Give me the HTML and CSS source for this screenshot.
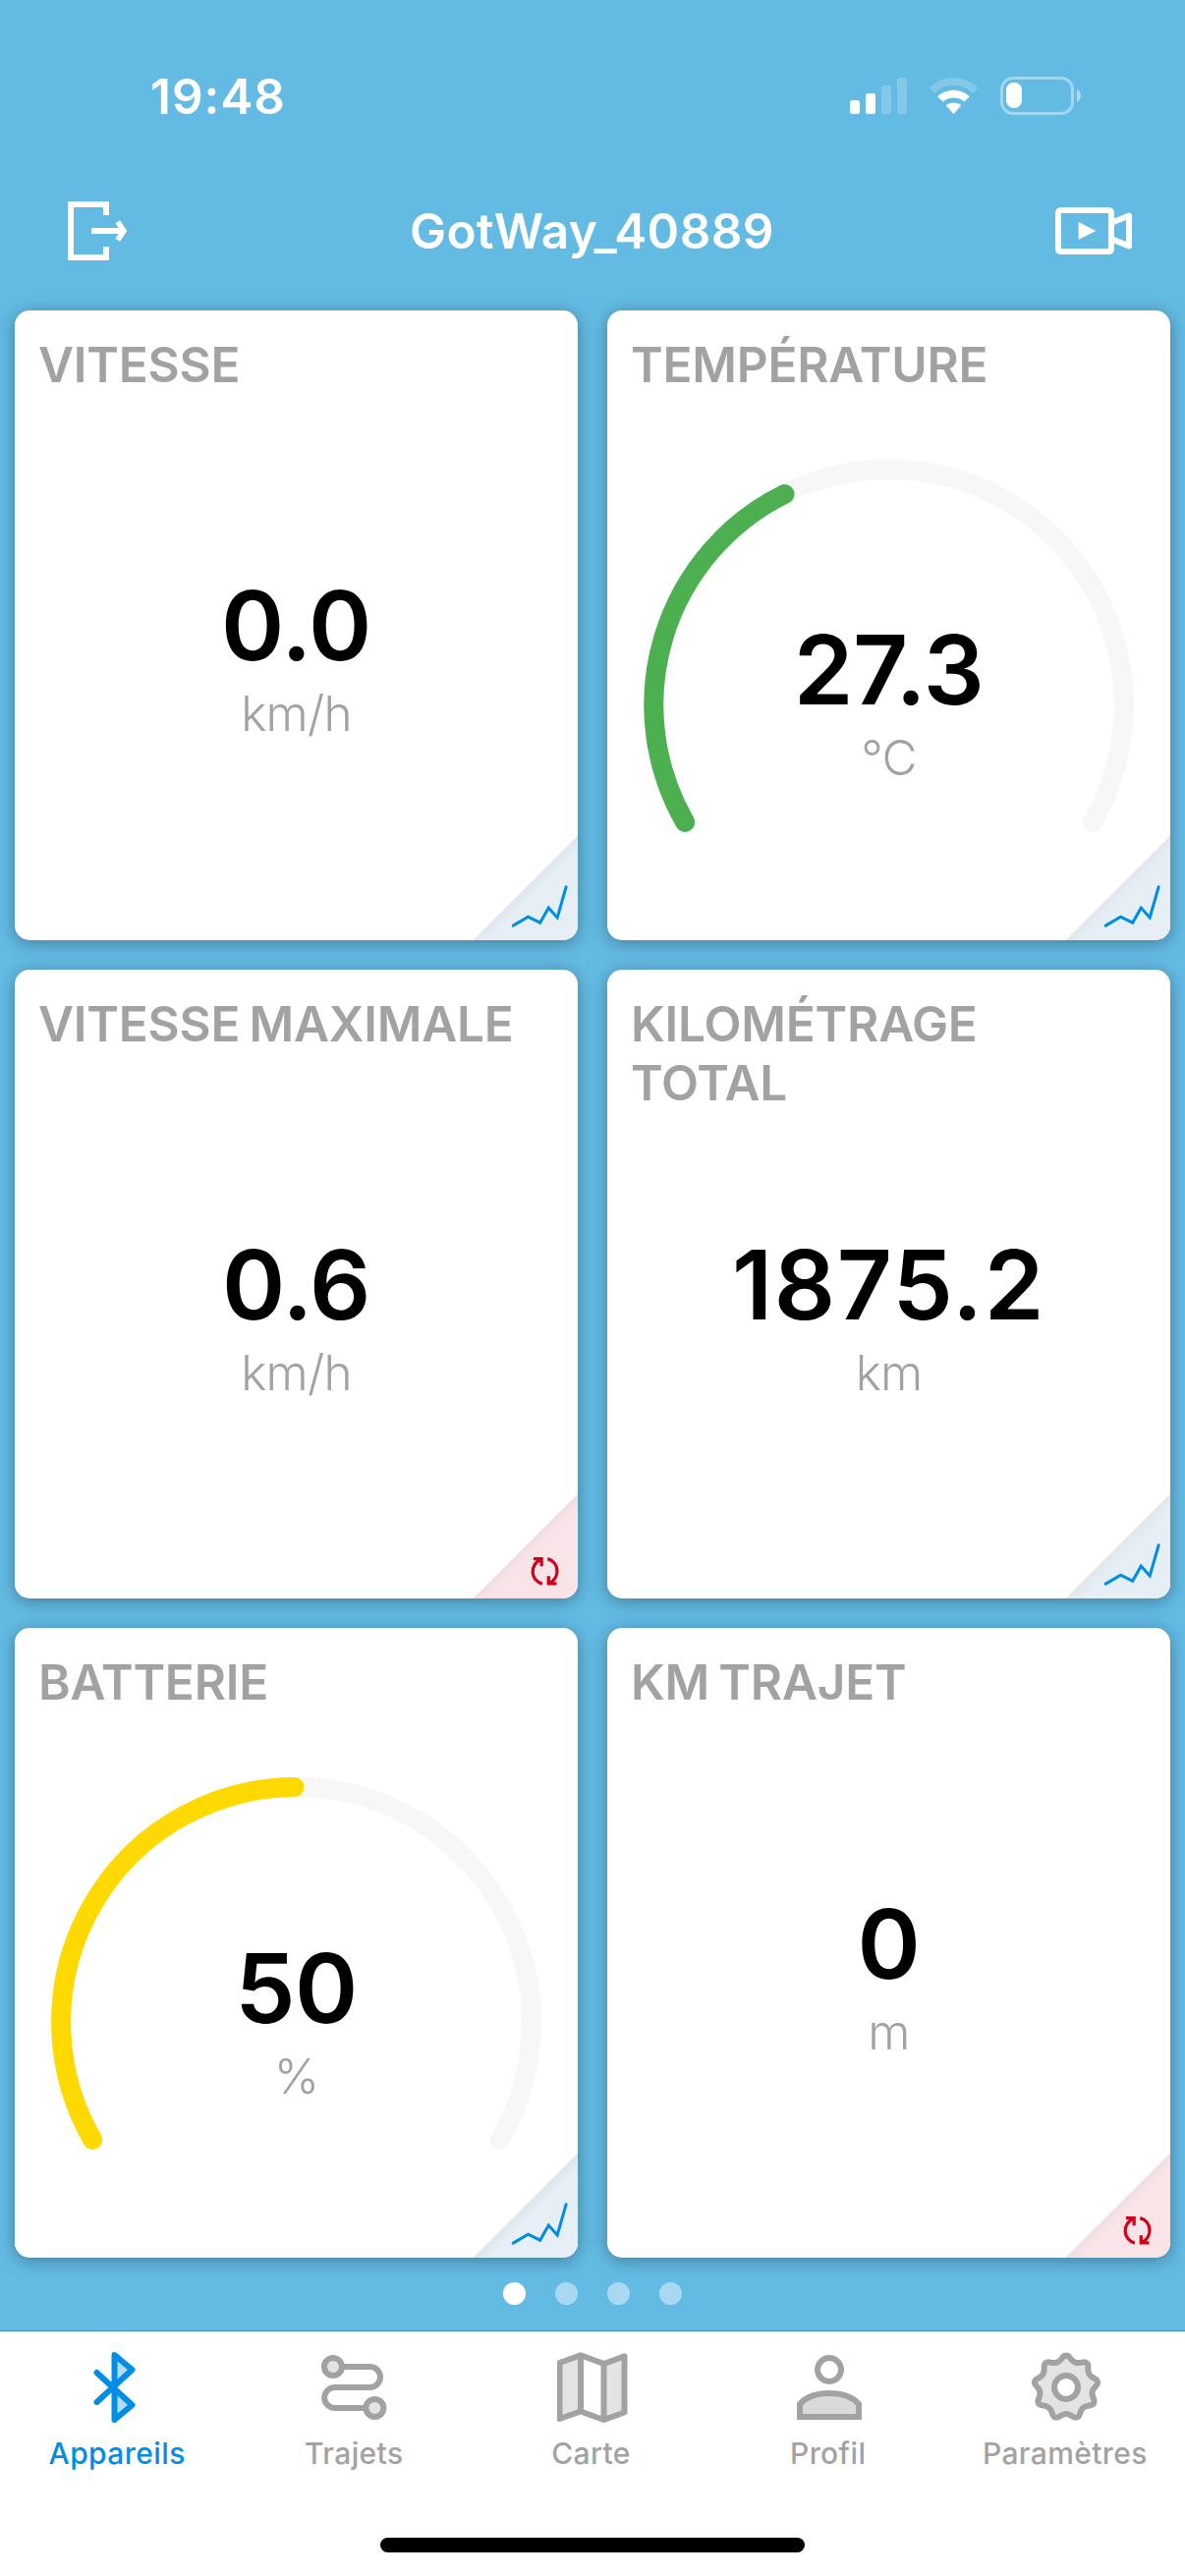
FILE: index.html
```
<!DOCTYPE html>
<html lang="fr">
<head>
  <meta charset="UTF-8" />
  <meta name="viewport" content="width=device-width, initial-scale=1.0"/>
  <title>GotWay_40889</title>
  <link rel="stylesheet" href="styles.css">
</head>
<body>

<!-- shared shapes -->
<svg class="defs" width="0" height="0">
  <symbol id="chart" viewBox="0 0 108 108">
    <path d="M41.7 93 L57 84 L69.3 90 L78 74.7 L87 84.7 L96 53.3" fill="none" stroke="#008de5" stroke-width="3.1" stroke-linecap="round"/>
  </symbol>
  <symbol id="reset" viewBox="0 0 108 108">
    <g fill="none" stroke="#d0021b" stroke-width="3.3">
      <path d="M71.5 93 A13.2 13.2 0 0 1 70 68"/>
      <path d="M62.5 67.3 H70.8 V75"/>
      <path d="M77 67.2 A13.2 13.2 0 0 1 79 92"/>
      <path d="M86.3 92.8 H78 V85"/>
    </g>
  </symbol>
</svg>

<div class="statusbar">
  <div class="time">19:48</div>
  <div class="indicators">
    <svg width="58" height="40" viewBox="0 0 58 40" fill="#fff">
      <rect x="0" y="24" width="10" height="14" rx="2.5"/>
      <rect x="16" y="17" width="10" height="21" rx="2.5"/>
      <rect x="32" y="9" width="10" height="29" rx="2.5" opacity="0.2"/>
      <rect x="48" y="1" width="10" height="37" rx="2.5" opacity="0.2"/>
    </svg>
    <svg width="51" height="40" viewBox="0 0 51 40" fill="#fff">
      <path opacity="0.2" d="M0.7 11.6 C14.5 -2.5 36.5 -2.5 50.3 11.6 L44.9 17 C34 6 17 6 6.1 17 Z"/>
      <path d="M9.2 20.3 C18.2 11.5 32.8 11.5 41.8 20.3 L36.4 25.6 C30.5 20.2 20.5 20.2 14.6 25.6 Z"/>
      <path d="M17.7 29.3 C22 25.6 29 25.6 33.3 29.3 L25.5 38 Z"/>
    </svg>
    <svg width="83" height="40" viewBox="0 0 83 40">
      <rect x="1.5" y="1.5" width="72" height="36" rx="11.5" fill="none" stroke="#fff" stroke-opacity="0.4" stroke-width="3"/>
      <rect x="6" y="6" width="16" height="26" rx="7.5" fill="#fff"/>
      <path d="M78 13 Q82 15.5 82 19.5 Q82 23.5 78 26 Z" fill="#fff" opacity="0.45"/>
    </svg>
  </div>
</div>

<div class="header">
  <svg width="62" height="60" viewBox="0 0 62 60" fill="none" stroke="#fff" stroke-width="6">
    <path d="M39 14 V3 H3 V57 H39 V46"/>
    <path d="M24 30 H56"/>
    <path d="M50.8 20.8 L57 30 L50.8 39.2" stroke-width="5.5"/>
  </svg>
  <h1>GotWay_40889</h1>
  <svg width="78" height="48" viewBox="0 0 78 48" fill="none" stroke="#fff" stroke-width="6">
    <rect x="3" y="3" width="54" height="42" rx="2.5"/>
    <path d="M23.6 15 L41.3 24 L23.6 33 Z" fill="#fff" stroke="none"/>
    <path d="M58 15.5 L75 8.5 V39.5 L58 32.5" stroke-linejoin="round"/>
  </svg>
</div>

<div class="cards">
  <div class="card">
    <h2>VITESSE</h2>
    <div class="reading"><span class="value">0.0</span><span class="unit">km/h</span></div>
    <svg class="corner blue"><use href="#chart"/></svg>
  </div>

  <div class="card">
    <h2>TEMPÉRATURE</h2>
    <svg class="gauge" viewBox="0 0 573 641">
      <path class="track" d="M79.1 521.2 A239.5 239.5 0 1 1 493.9 521.2"/>
      <path class="level green" d="M79.1 521.2 A239.5 239.5 0 0 1 180.5 187"/>
    </svg>
    <div class="reading low"><span class="value">27.3</span><span class="unit">°C</span></div>
    <svg class="corner blue"><use href="#chart"/></svg>
  </div>

  <div class="card">
    <h2>VITESSE MAXIMALE</h2>
    <div class="reading"><span class="value">0.6</span><span class="unit">km/h</span></div>
    <svg class="corner red"><use href="#reset"/></svg>
  </div>

  <div class="card">
    <h2>KILOMÉTRAGE<br>TOTAL</h2>
    <div class="reading"><span class="value long">1875.2</span><span class="unit">km</span></div>
    <svg class="corner blue"><use href="#chart"/></svg>
  </div>

  <div class="card">
    <h2>BATTERIE</h2>
    <svg class="gauge" viewBox="0 0 573 641">
      <path class="track" d="M79.1 521.2 A239.5 239.5 0 1 1 493.9 521.2"/>
      <path class="level yellow" d="M79.1 521.2 A239.5 239.5 0 0 1 284.5 162"/>
    </svg>
    <div class="reading low"><span class="value">50</span><span class="unit">%</span></div>
    <svg class="corner blue"><use href="#chart"/></svg>
  </div>

  <div class="card">
    <h2>KM TRAJET</h2>
    <div class="reading"><span class="value">0</span><span class="unit">m</span></div>
    <svg class="corner red"><use href="#reset"/></svg>
  </div>
</div>

<div class="dots">
  <span class="dot active"></span>
  <span class="dot"></span>
  <span class="dot"></span>
  <span class="dot"></span>
</div>

<div class="tabbar">
  <div class="tabs">
    <div class="tab active">
      <svg viewBox="0 0 72 72">
        <path class="tint" d="M31.5 36 V3 L49.5 18 Z M31.5 36 V69 L49.5 54 Z"/>
        <path d="M13.5 21 L49.5 54 L31.5 69 V3 L49.5 18 L13.5 51"/>
      </svg>
      <span>Appareils</span>
    </div>
    <div class="tab">
      <svg viewBox="0 0 72 72">
        <circle class="tint" cx="13" cy="15" r="9"/>
        <circle class="tint" cx="55.4" cy="57" r="9"/>
        <circle cx="13" cy="15" r="9"/>
        <circle cx="55.4" cy="57" r="9"/>
        <path d="M22 15 H50.5 a10.5 10.5 0 0 1 0 21 H14.7 a10.5 10.5 0 0 0 0 21 H46"/>
      </svg>
      <span>Trajets</span>
    </div>
    <div class="tab">
      <svg viewBox="0 0 72 72">
        <path class="tint" d="M2.5 11 L24 3.3 V60.5 L2.5 68 Z M47.5 12 L68.5 4.3 V61.5 L47.5 69 Z"/>
        <path d="M2.5 11 L24 3.3 L47.5 12 L68.5 4.3 V61.5 L47.5 69 L24 60.5 L2.5 68 Z M24 3.3 V60.5 M47.5 12 V69"/>
      </svg>
      <span>Carte</span>
    </div>
    <div class="tab">
      <svg viewBox="0 0 72 72">
        <circle cx="36" cy="18" r="12"/>
        <path class="tint dark" d="M6 66 V53 C12 46 22 42 36 42 S60 46 66 53 V66 Z"/>
        <path class="sharp" d="M6 66 V53 C12 46 22 42 36 42 S60 46 66 53 V66 Z"/>
      </svg>
      <span>Profil</span>
    </div>
    <div class="tab">
      <svg viewBox="0 0 72 72">
        <path class="tint" fill-rule="evenodd" d="M36 3.5 C40.5 3.5 39.6 8.6 45.2 10.6 S53.4 8.2 56.9 11.1 S56.4 17.3 59.4 22.5 S67.2 25.9 68 30.4 S63.6 34.8 62.6 40.7 S66.4 48.4 64.1 52.3 S58 52.8 53.4 56.7 S51.3 65 47.1 66.5 S42 63 36 63 S29.1 68 24.9 66.5 S23.2 60.6 18.6 56.7 S10.2 56.2 7.9 52.3 S10.4 46.6 9.4 40.7 S3.2 34.9 4 30.4 S9.6 27.7 12.6 22.5 S11.6 14 15.1 11.1 S21.2 12.6 26.8 10.6 S31.5 3.5 36 3.5 Z M24 36 a12 12 0 1 0 24 0 a12 12 0 1 0 -24 0 Z"/>
        <path d="M36 3.5 C40.5 3.5 39.6 8.6 45.2 10.6 S53.4 8.2 56.9 11.1 S56.4 17.3 59.4 22.5 S67.2 25.9 68 30.4 S63.6 34.8 62.6 40.7 S66.4 48.4 64.1 52.3 S58 52.8 53.4 56.7 S51.3 65 47.1 66.5 S42 63 36 63 S29.1 68 24.9 66.5 S23.2 60.6 18.6 56.7 S10.2 56.2 7.9 52.3 S10.4 46.6 9.4 40.7 S3.2 34.9 4 30.4 S9.6 27.7 12.6 22.5 S11.6 14 15.1 11.1 S21.2 12.6 26.8 10.6 S31.5 3.5 36 3.5 Z"/>
        <circle cx="36" cy="36" r="12"/>
      </svg>
      <span>Paramètres</span>
    </div>
  </div>
  <div class="home"></div>
</div>

</body>
</html>
```
FILE: styles.css
```
* {
  box-sizing: border-box;
  margin: 0;
  padding: 0;
}

body {
  width: 1206px;
  height: 2622px;
  display: flex;
  flex-direction: column;
  overflow: hidden;
  background-color: #63bbe4;
  font-family: Inter, "Liberation Sans", sans-serif;
}

svg {
  display: block;
}

.defs {
  position: absolute;
}

.statusbar {
  height: 196px;
  padding: 0 105px 0 153px;
  display: flex;
  justify-content: space-between;
  align-items: center;
  color: white;
}

.time {
  font-size: 49.5px;
  font-weight: 600;
  letter-spacing: 1px;
}

.indicators {
  display: flex;
  gap: 22px;
}

.header {
  height: 78px;
  padding: 0 54px 0 69px;
  display: flex;
  justify-content: space-between;
  align-items: center;
  color: white;
}

h1 {
  font-size: 49.5px;
  font-weight: 600;
  letter-spacing: 0.4px;
}

.cards {
  height: 2024px;
  padding: 42px 15px 0;
  display: grid;
  grid-template-columns: 1fr 1fr;
  grid-template-rows: repeat(3, 1fr);
  gap: 30px;
}

/* everything in a card is stacked in one grid cell */
.card {
  display: grid;
  grid-template: 100% / 100%;
  overflow: hidden;
  background-color: white;
  border-radius: 15px;
  box-shadow: 0 3px 18px rgba(0, 0, 0, 0.34);
}

.card > * {
  grid-area: 1 / 1;
}

h2 {
  padding: 25px 24px 0;
  font-size: 49.5px;
  line-height: 60px;
  font-weight: 600;
  letter-spacing: -0.2px;
  word-spacing: -3px;
  color: #a2a2a2;
}

.gauge {
  width: 100%;
  height: 100%;
  fill: none;
  stroke-width: 20;
  stroke-linecap: round;
}

.track {
  stroke: #f7f7f7;
}

.green {
  stroke: #4caf50;
}

.yellow {
  stroke: #ffd900;
}

.reading {
  align-self: center;
  display: flex;
  flex-direction: column;
  padding-top: 80px;
  text-align: center;
}

.reading.low {
  padding-top: 170px;
}

.value {
  font-size: 97.5px;
  line-height: 100px;
  font-weight: 600;
  letter-spacing: -0.5px;
}

.value.long {
  letter-spacing: 1.6px;
}

.unit {
  font-size: 49.5px;
  line-height: 78px;
  font-weight: 300;
  letter-spacing: -0.8px;
  color: #a2a2a2;
}

.corner {
  width: 107px;
  height: 107px;
  place-self: end;
}

.blue {
  background: linear-gradient(135deg, transparent 50%, #e0e7ed 50.5%, #e6eef6 58%);
}

.red {
  background: linear-gradient(135deg, transparent 50%, #f2dfe2 50.5%, #f9e5e8 58%);
}

.dots {
  height: 74px;
  display: flex;
  justify-content: center;
  align-items: center;
  gap: 30px;
  padding-bottom: 2px;
}

.dot {
  width: 23px;
  height: 23px;
  border-radius: 50%;
  background-color: rgba(255, 255, 255, 0.45);
}

.dot.active {
  background-color: white;
}

.tabbar {
  flex: 1;
  display: flex;
  flex-direction: column;
  justify-content: space-between;
  align-items: center;
  padding: 21px 0 24px;
  border-top: 1px solid #3f89ae;
  background-color: white;
}

.tabs {
  width: 100%;
  display: grid;
  grid-template-columns: repeat(5, 1fr);
}

.tab {
  display: flex;
  flex-direction: column;
  align-items: center;
  gap: 13px;
  color: #a2a2a2;
  font-size: 30px;
  line-height: 36px;
  font-weight: 500;
  letter-spacing: 0.4px;
}

.tab span {
  padding-right: 3px;
}

.tab.active {
  color: #008de5;
}

.tab svg {
  width: 72px;
  height: 72px;
  fill: none;
  stroke: currentColor;
  stroke-width: 6;
  stroke-linecap: round;
  stroke-linejoin: round;
}

.tab .tint {
  fill: currentColor;
  fill-opacity: 0.3;
  stroke: none;
}

.tab .dark {
  fill-opacity: 0.4;
}

.tab .sharp {
  stroke-linejoin: miter;
}

.home {
  width: 432px;
  height: 15px;
  border-radius: 8px;
  background-color: black;
}
```
